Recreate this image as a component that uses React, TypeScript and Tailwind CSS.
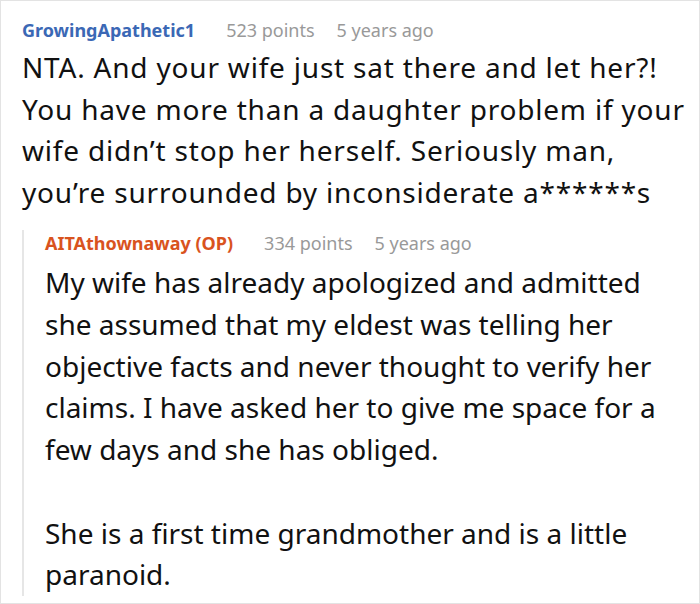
export default function App() {
  return (
    <div className="w-[700px] h-[604px] bg-white border border-[#e3e3e3] overflow-hidden font-['Noto_Sans','Open_Sans',sans-serif] text-[#111111]">
      <div className="pl-[21px] pt-[16px]">
        {/* Top comment */}
        <div className="flex items-center gap-[31px] text-[18px] leading-[26px]">
          <span className="font-bold text-[#3b68b5]">GrowingApathetic1</span>
          <div className="flex gap-[22px] text-[#999999]">
            <span>523 points</span>
            <span>5 years ago</span>
          </div>
        </div>
        <p className="mt-[4px] whitespace-nowrap text-[28px] leading-[41.5px] tracking-[0.8px]">
          NTA. And your wife just sat there and let her?!
          <br />
          You have more than a daughter problem if your
          <br />
          wife didn’t stop her herself. Seriously man,
          <br />
          you’re surrounded by inconsiderate a******s
        </p>

        {/* Reply */}
        <div className="mt-[25px] border-l-2 border-[#e6e6e6] pl-[21px]">
          <div className="-mt-[8px] flex items-center gap-[31px] text-[18px] leading-[26px]">
            <span className="font-bold text-[#d9531e]">AITAthownaway (OP)</span>
            <div className="flex gap-[22px] text-[#999999]">
              <span>334 points</span>
              <span>5 years ago</span>
            </div>
          </div>
          <div className="mt-[6px] whitespace-nowrap text-[28px] leading-[41.75px]">
            <p>
              My wife has already apologized and admitted
              <br />
              she assumed that my eldest was telling her
              <br />
              objective facts and never thought to verify her
              <br />
              claims. I have asked her to give me space for a
              <br />
              few days and she has obliged.
            </p>
            <p className="mt-[41.75px]">
              She is a first time grandmother and is a little
              <br />
              paranoid.
            </p>
          </div>
        </div>
      </div>
    </div>
  );
}
